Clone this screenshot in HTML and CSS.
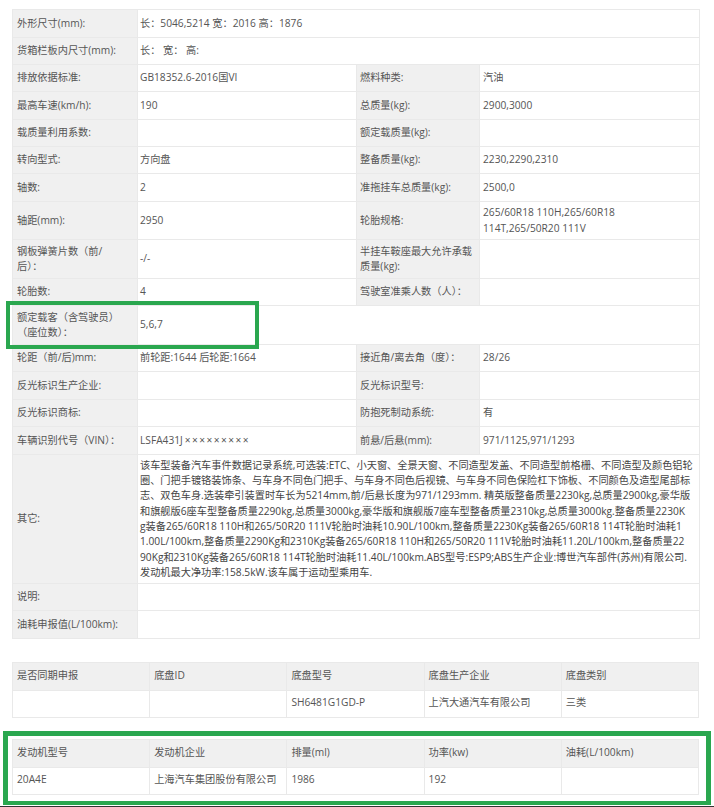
FILE: index.html
```html
<!DOCTYPE html>
<html lang="zh">
<head>
<meta charset="utf-8">
<title>车辆参数</title>
<link rel="stylesheet" href="styles.css">
</head>
<body>
<main class="page">
<table class="spec">
<colgroup><col class="c1"><col class="c2"><col class="c3"><col class="c4"></colgroup>
<tr class="h28"><th>外形尺寸(mm):</th><td colspan="3">长：5046,5214 宽：2016 高：1876</td></tr>
<tr class="h27"><th>货箱栏板内尺寸(mm):</th><td colspan="3">长： 宽： 高:</td></tr>
<tr class="h27"><th>排放依据标准:</th><td>GB18352.6-2016国VI</td><th>燃料种类:</th><td>汽油</td></tr>
<tr class="h28"><th>最高车速(km/h):</th><td>190</td><th>总质量(kg):</th><td>2900,3000</td></tr>
<tr class="h27"><th>载质量利用系数:</th><td></td><th>额定载质量(kg):</th><td></td></tr>
<tr class="h27"><th>转向型式:</th><td>方向盘</td><th>整备质量(kg):</th><td>2230,2290,2310</td></tr>
<tr class="h28"><th>轴数:</th><td>2</td><th>准拖挂车总质量(kg):</th><td>2500,0</td></tr>
<tr class="h38"><th>轴距(mm):</th><td>2950</td><th>轮胎规格:</th><td>265/60R18 110H,265/60R18<br>114T,265/50R20 111V</td></tr>
<tr class="h39"><th>钢板弹簧片数（前/<br>后）：</th><td>-/-</td><th>半挂车鞍座最大允许承载<br>质量(kg):</th><td></td></tr>
<tr class="h27"><th>轮胎数:</th><td>4</td><th>驾驶室准乘人数（人）：</th><td></td></tr>
<tr class="h39"><th>额定载客（含驾驶员）<br>（座位数）：</th><td colspan="3">5,6,7</td></tr>
<tr class="h27"><th>轮距（前/后)mm:</th><td>前轮距:1644 后轮距:1664</td><th>接近角/离去角（度）：</th><td>28/26</td></tr>
<tr class="h28"><th>反光标识生产企业:</th><td></td><th>反光标识型号:</th><td></td></tr>
<tr class="h27"><th>反光标识商标:</th><td></td><th>防抱死制动系统:</th><td>有</td></tr>
<tr class="h28"><th>车辆识别代号（VIN）：</th><td>LSFA431J<span class="masked">×××××××××</span></td><th>前悬/后悬(mm):</th><td>971/1125,971/1293</td></tr>
<tr class="h129"><th>其它:</th><td colspan="3" class="long">该车型装备汽车事件数据记录系统,可选装:ETC、小天窗、全景天窗、不同造型发盖、不同造型前格栅、不同造型及颜色铝轮<br>圈、门把手镀铬装饰条、与车身不同色门把手、与车身不同色后视镜、与车身不同色保险杠下饰板、不同颜色及造型尾部标<br>志、双色车身.选装牵引装置时车长为5214mm,前/后悬长度为971/1293mm. 精英版整备质量2230kg,总质量2900kg,豪华版<br>和旗舰版6座车型整备质量2290kg,总质量3000kg,豪华版和旗舰版7座车型整备质量2310kg,总质量3000kg.整备质量2230K<br>g装备265/60R18 110H和265/50R20 111V轮胎时油耗10.90L/100km,整备质量2230Kg装备265/60R18 114T轮胎时油耗1<br>1.00L/100km,整备质量2290Kg和2310Kg装备265/60R18 110H和265/50R20 111V轮胎时油耗11.20L/100km,整备质量22<br>90Kg和2310Kg装备265/60R18 114T轮胎时油耗11.40L/100km.ABS型号:ESP9;ABS生产企业:博世汽车部件(苏州)有限公司.<br>发动机最大净功率:158.5kW.该车属于运动型乘用车.</td></tr>
<tr class="h27"><th>说明:</th><td colspan="3"></td></tr>
<tr class="h28"><th>油耗申报值(L/100km):</th><td colspan="3"></td></tr>
</table>
<div class="mark-seat"></div>

<table class="five chassis">
<tr class="h28"><th>是否同期申报</th><th>底盘ID</th><th>底盘型号</th><th>底盘生产企业</th><th>底盘类别</th></tr>
<tr class="h27"><td></td><td></td><td>SH6481G1GD-P</td><td>上汽大通汽车有限公司</td><td>三类</td></tr>
</table>

<section class="engine-box">
<table class="five">
<tr class="h28"><th>发动机型号</th><th>发动机企业</th><th>排量(ml)</th><th>功率(kw)</th><th>油耗(L/100km)</th></tr>
<tr class="h27"><td>20A4E</td><td>上海汽车集团股份有限公司</td><td>1986</td><td>192</td><td></td></tr>
</table>
</section>
<div class="rule"></div>
</main>
</body>
</html>
```

FILE: styles.css
```css
* { box-sizing: border-box; }
html, body { margin: 0; padding: 0; background: #fff; }
body { width: 714px; height: 807px; overflow: hidden; }
.page {
  position: relative;
  padding: 9px 0 0 12px;
  height: 807px;
  font-family: "Open Sans", "Noto Sans CJK SC", sans-serif;
  font-size: 10.2px;
  line-height: 15.5px;
  color: #555;
}
table {
  border-collapse: collapse;
  table-layout: fixed;
  width: 687px;
}
th, td {
  border: 1px solid #e9e9e9;
  padding: 0 3px 2px 4px;
  font-weight: 400;
  text-align: left;
  vertical-align: middle;
  white-space: nowrap;
  overflow: hidden;
}
th { background: #f0f0f0; }
.spec { height: 629px; }
.spec th, .spec td { padding-bottom: 0; }
.spec td:nth-child(2) { padding-left: 2px; }
.spec td:nth-child(4) { padding-left: 3px; }
.spec th:nth-child(3) { padding-left: 3px; }
.masked { letter-spacing: 1.4px; margin-left: 2px; }
.c1 { width: 125px; }
.c2 { width: 219px; }
.c3 { width: 123px; }
.c4 { width: 220px; }
.h27 { height: 27px; }
.h28 { height: 28px; }
.h38 { height: 38px; }
.h39 { height: 39px; }
.h129 { height: 129px; }
.long { color: #444; line-height: 15.3px; }
.mark-seat {
  position: absolute;
  left: 6px;
  top: 301px;
  width: 253px;
  height: 48px;
  border: 4px solid #2aa74f;
}
.chassis { margin-top: 23px; }
.engine-box {
  width: 708px;
  height: 74px;
  margin: 13px 0 0 -9px;
  padding: 3px 0 0 4px;
  border: solid #2aa74f;
  border-width: 5px 5px 4px;
}
.rule {
  height: 2px;
  width: 714px;
  margin: 1px 0 0 -12px;
  background: #333;
}
.five th, .five td { width: 20%; }
```
